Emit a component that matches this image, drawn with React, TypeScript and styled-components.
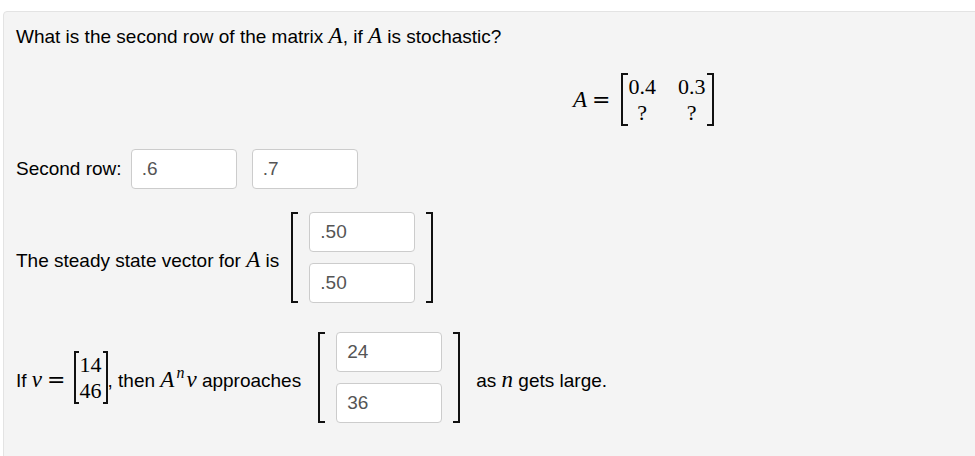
import React from 'react';
import styled, { createGlobalStyle } from 'styled-components';

const GlobalStyle = createGlobalStyle`
  html, body {
    margin: 0;
    padding: 0;
    background: #fff;
  }
  body {
    font-family: "Liberation Sans", Arial, sans-serif;
    color: #000;
    overflow: hidden;
  }
`;

const Page = styled.div`
  width: 975px;
  height: 456px;
  overflow: hidden;
  padding: 11px 0 0 3px;
  box-sizing: border-box;
`;

const Panel = styled.div`
  background: #f4f4f4;
  border: 1px solid #e3e3e3;
  border-radius: 4px;
  padding: 11px 12px 40px;
  margin-right: -12px;
  min-height: 480px;
  font-size: 19px;
  line-height: 26px;
`;

const Question = styled.p`
  margin: 0;
`;

const V = styled.span`
  font-family: "Liberation Serif", "Times New Roman", serif;
  font-style: italic;
  font-size: 23px;
`;

const Sup = styled.sup`
  font-family: "Liberation Serif", "Times New Roman", serif;
  font-style: italic;
  font-size: 16px;
  line-height: 0;
  vertical-align: 9px;
  margin: 0 2px 0 2px;
`;

const Eq = styled.span<{ $after?: number }>`
  font-family: "DejaVu Serif", "Liberation Serif", serif;
  font-size: 22px;
  margin: 0 ${({ $after }) => $after ?? 10}px 0 5px;
`;

const DisplayRow = styled.div`
  display: flex;
  align-items: center;
  margin-top: 23px;
  padding-left: 557px;
`;

const Row = styled.div<{ $top: number; $gap?: number }>`
  display: flex;
  align-items: center;
  gap: ${({ $gap }) => $gap ?? 0}px;
  margin-top: ${({ $top }) => $top}px;
`;

const Matrix = styled.span`
  display: inline-flex;
  align-items: stretch;
`;

const Bracket = styled.span<{ $side: 'left' | 'right'; $w?: number }>`
  width: ${({ $w }) => $w ?? 7}px;
  border-top: 2px solid #111;
  border-bottom: 2px solid #111;
  ${({ $side }) => ($side === 'left' ? 'border-left' : 'border-right')}: 2px solid #111;
  box-sizing: border-box;
  flex: none;
`;

const NumGrid = styled.span<{ $cols: number; $gap: number }>`
  display: grid;
  grid-template-columns: repeat(${({ $cols }) => $cols}, auto);
  column-gap: ${({ $gap }) => $gap}px;
  justify-items: center;
  font-family: "Liberation Serif", "Times New Roman", serif;
  font-size: 22px;
  line-height: 26px;
  padding: 1px 1px 0;
`;

const VectorInputs = styled.span`
  display: flex;
  flex-direction: column;
  gap: 11px;
  padding: 0 11px;
`;

const Answer = styled.input`
  width: 106px;
  height: 40px;
  box-sizing: border-box;
  border: 1px solid #ccc;
  border-radius: 4px;
  background: #fff;
  padding: 0 10px;
  font-family: "Liberation Sans", Arial, sans-serif;
  font-size: 19px;
  color: #555;
  outline: none;
`;

const Label = styled.span<{ $before?: number; $after?: number; $drop?: number }>`
  white-space: nowrap;
  margin-left: ${({ $before }) => $before ?? 0}px;
  margin-right: ${({ $after }) => $after ?? 0}px;
  padding-top: ${({ $drop }) => $drop ?? 0}px;
`;

const App = () => {
  return (
    <>
      <GlobalStyle />
      <Page>
        <Panel>
          <Question>
            What is the second row of the matrix <V>A</V>, if <V>A</V> is stochastic?
          </Question>

          <DisplayRow>
            <V>A</V>
            <Eq>=</Eq>
            <Matrix>
              <Bracket $side="left" />
              <NumGrid $cols={2} $gap={22}>
                <span>0.4</span>
                <span>0.3</span>
                <span>?</span>
                <span>?</span>
              </NumGrid>
              <Bracket $side="right" />
            </Matrix>
          </DisplayRow>

          <Row $top={23} $gap={9}>
            <Label>Second row:</Label>
            <Answer readOnly value=".6" />
            <Answer readOnly value=".7" style={{ marginLeft: 6 }} />
          </Row>

          <Row $top={23} $gap={12}>
            <Label $drop={5}>
              The steady state vector for <V>A</V> is
            </Label>
            <Matrix>
              <Bracket $side="left" />
              <VectorInputs>
                <Answer readOnly value=".50" />
                <Answer readOnly value=".50" />
              </VectorInputs>
              <Bracket $side="right" />
            </Matrix>
          </Row>

          <Row $top={29}>
            <Label $drop={5}>
              If <V>v</V>
              <Eq $after={8}>=</Eq>
            </Label>
            <Matrix>
              <Bracket $side="left" $w={5} />
              <NumGrid $cols={1} $gap={0}>
                <span>14</span>
                <span>46</span>
              </NumGrid>
              <Bracket $side="right" $w={5} />
            </Matrix>
            <Label $after={17} $drop={5}>
              , then <V>A</V>
              <Sup>n</Sup>
              <V>v</V> approaches
            </Label>
            <Matrix>
              <Bracket $side="left" />
              <VectorInputs>
                <Answer readOnly value="24" />
                <Answer readOnly value="36" />
              </VectorInputs>
              <Bracket $side="right" />
            </Matrix>
            <Label $before={16} $drop={5}>
              as <V>n</V> gets large.
            </Label>
          </Row>
        </Panel>
      </Page>
    </>
  );
};

export default App;
